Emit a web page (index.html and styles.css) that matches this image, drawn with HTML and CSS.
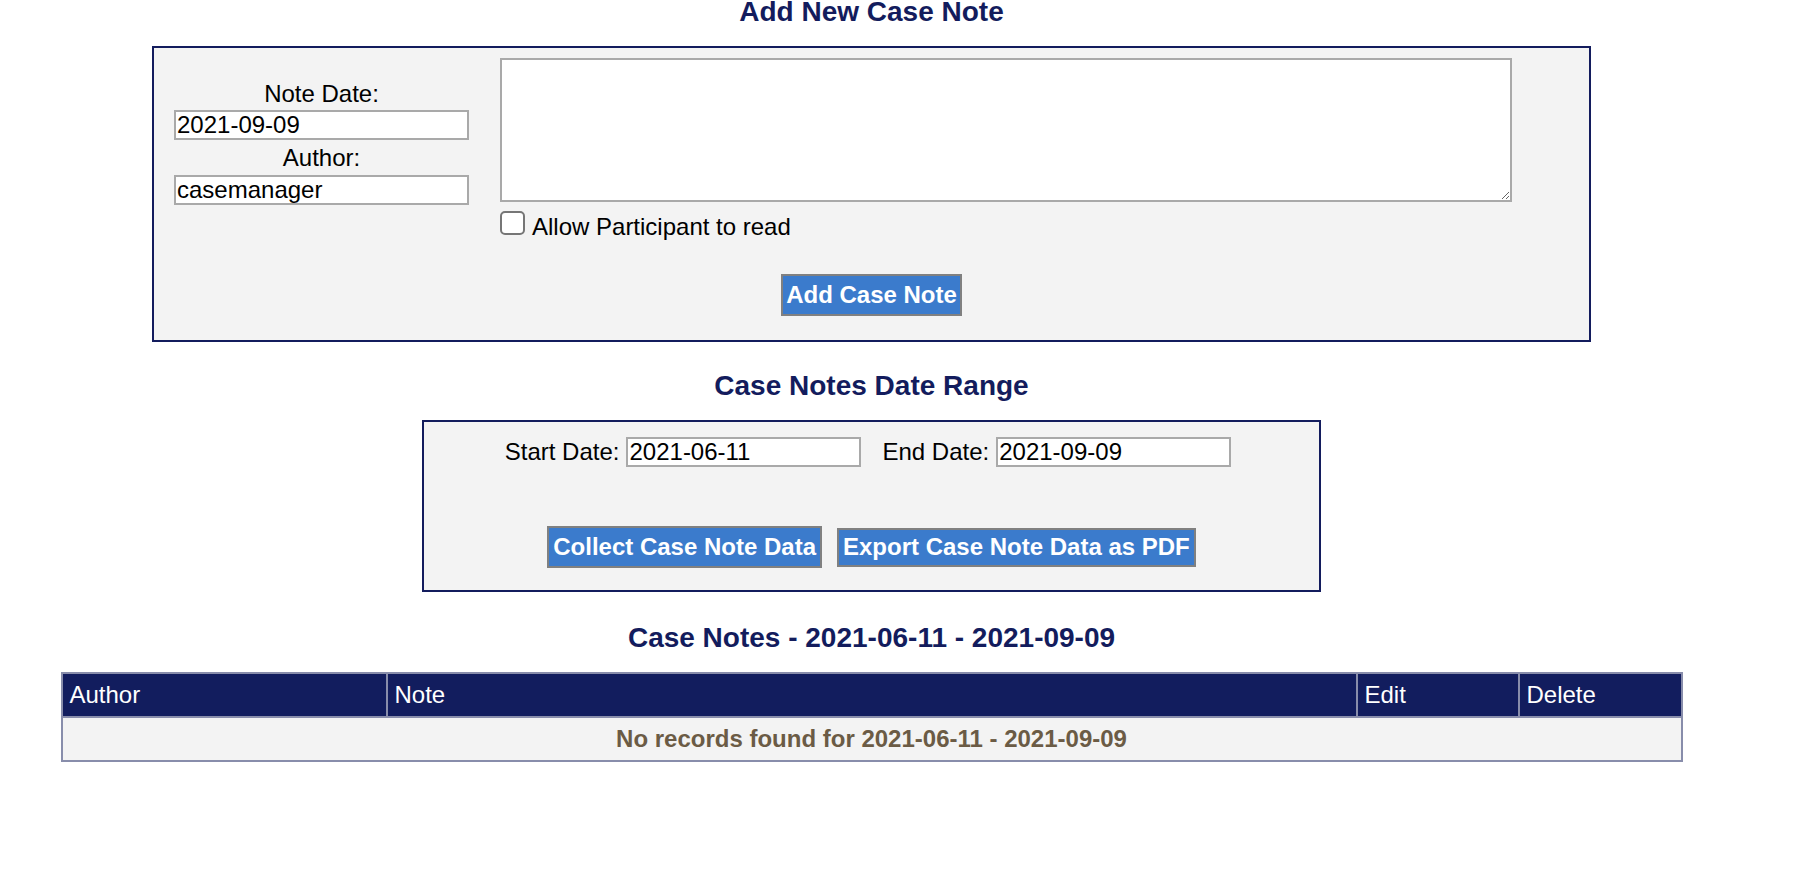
FILE: index.html
```html
<!DOCTYPE html>
<html lang="en">
<head>
<meta charset="utf-8">
<title>Case Notes</title>
<link rel="stylesheet" href="styles.css">
</head>
<body>
<div class="page">
  <h2 class="title title-first">Add New Case Note</h2>
  <div class="panel panel-note">
    <div class="note-row">
      <div class="note-meta">
        <label class="meta-label">Note Date:</label>
        <input class="field field-wide" type="text" value="2021-09-09">
        <label class="meta-label meta-label-2">Author:</label>
        <input class="field field-wide" type="text" value="casemanager">
      </div>
      <div class="note-body">
        <textarea class="note-text"></textarea>
        <label class="check-line"><input type="checkbox" class="check"><span class="check-text">Allow Participant to read</span></label>
      </div>
    </div>
    <div class="btn-row btn-row-add">
      <button class="btn btn-add" type="button">Add Case Note</button>
    </div>
  </div>

  <h2 class="title title-range">Case Notes Date Range</h2>
  <div class="panel panel-range">
    <div class="range-row">
      <span class="range-label">Start Date:</span>
      <input class="field field-date" type="text" value="2021-06-11">
      <span class="range-label range-label-end">End Date:</span>
      <input class="field field-date" type="text" value="2021-09-09">
    </div>
    <div class="btn-row btn-row-range">
      <button class="btn btn-collect" type="button">Collect Case Note Data</button>
      <button class="btn btn-export" type="button">Export Case Note Data as PDF</button>
    </div>
  </div>

  <h2 class="title title-notes">Case Notes - 2021-06-11 - 2021-09-09</h2>
  <table class="notes-table">
    <colgroup>
      <col class="col-author">
      <col class="col-note">
      <col class="col-edit">
      <col class="col-delete">
    </colgroup>
    <thead>
      <tr>
        <th>Author</th>
        <th>Note</th>
        <th>Edit</th>
        <th>Delete</th>
      </tr>
    </thead>
    <tbody>
      <tr>
        <td colspan="4" class="empty-cell">No records found for 2021-06-11 - 2021-09-09</td>
      </tr>
    </tbody>
  </table>
</div>
</body>
</html>
```

FILE: styles.css
```css
html, body {
  margin: 0;
  padding: 0;
  background: #ffffff;
}

body {
  font-family: "Liberation Sans", Arial, sans-serif;
  font-size: 24px;
  color: #000000;
}

.page {
  width: 1743px;
}

.title {
  margin: 0;
  font-size: 28px;
  font-weight: bold;
  color: #131c5d;
  text-align: center;
  line-height: 32px;
}

.title-first {
  line-height: 24px;
  margin-bottom: 22px;
}

.title-range {
  margin-top: 28px;
  margin-bottom: 18px;
}

.title-notes {
  margin-top: 30px;
  margin-bottom: 18px;
}

.panel {
  box-sizing: border-box;
  margin: 0 auto;
  border: 2px solid #131c5d;
  background: #f3f3f3;
}

.panel-note {
  width: 1439px;
  padding: 10px 0 24px 0;
}

.note-row {
  display: flex;
  align-items: flex-start;
}

.note-meta {
  display: flex;
  flex-direction: column;
  align-items: center;
  width: 295px;
  margin-left: 20px;
  margin-top: 22px;
}

.meta-label {
  line-height: 28px;
  margin-bottom: 2px;
}

.meta-label-2 {
  margin-bottom: 3px;
}

.field {
  box-sizing: border-box;
  height: 30px;
  border: 2px solid #a9a9a9;
  border-radius: 0;
  padding: 0 1px;
  margin: 0;
  font-family: "Liberation Sans", Arial, sans-serif;
  font-size: 24px;
  color: #000000;
  background: #ffffff;
  outline: none;
}

.field-wide {
  width: 295px;
  margin-bottom: 4px;
}

.note-body {
  margin-left: 31px;
}

.note-text {
  display: block;
  box-sizing: border-box;
  width: 1012px;
  height: 144px;
  margin: 0;
  border: 2px solid #a9a9a9;
  background: #ffffff;
  font-family: "Liberation Sans", Arial, sans-serif;
  font-size: 24px;
}

.check-line {
  display: flex;
  align-items: flex-start;
  margin-top: 9px;
}

.check {
  appearance: none;
  -webkit-appearance: none;
  box-sizing: border-box;
  width: 25px;
  height: 24px;
  margin: 0 7px 0 0;
  border: 2px solid #767676;
  border-radius: 5px;
  background: #ffffff;
}

.check-text {
  margin-top: 2px;
  line-height: normal;
}

.btn-row {
  display: flex;
  justify-content: center;
  align-items: center;
}

.btn-row-add {
  margin-top: 33px;
}

.btn {
  margin: 0;
  border: 2px solid #808080;
  border-radius: 0;
  background: #3b7bcc;
  color: #ffffff;
  font-family: "Liberation Sans", Arial, sans-serif;
  font-weight: bold;
  line-height: normal;
  cursor: pointer;
}

.btn-add {
  font-size: 24px;
  padding: 5px 3px;
}

.panel-range {
  width: 899px;
  padding: 15px 0 22px 0;
}

.range-row {
  display: flex;
  justify-content: center;
  align-items: baseline;
  padding-right: 7px;
}

.range-label {
  line-height: normal;
  margin-right: 7px;
}

.range-label-end {
  margin-left: 21px;
}

.field-date {
  width: 235px;
}

.btn-row-range {
  margin-top: 59px;
  gap: 15px;
}

.btn-collect {
  font-size: 24px;
  padding: 5px 4px;
}

.btn-export {
  font-size: 24px;
  padding: 3.5px 4px;
}

.notes-table {
  width: 1620px;
  margin: 0 auto;
  table-layout: fixed;
  border-collapse: collapse;
  border: 2px solid #888dab;
}

.col-author { width: 325px; }
.col-note { width: 970px; }
.col-edit { width: 162px; }
.col-delete { width: 163px; }

.notes-table th {
  background: #121d5e;
  color: #ffffff;
  font-weight: normal;
  text-align: left;
  padding: 7px 6px 7px 7px;
  border: 2px solid #888dab;
  line-height: normal;
}

.empty-cell {
  background: #f3f3f3;
  color: #6b5b45;
  font-weight: bold;
  text-align: center;
  padding: 7px 5px;
  border: 2px solid #888dab;
  line-height: normal;
}
```
